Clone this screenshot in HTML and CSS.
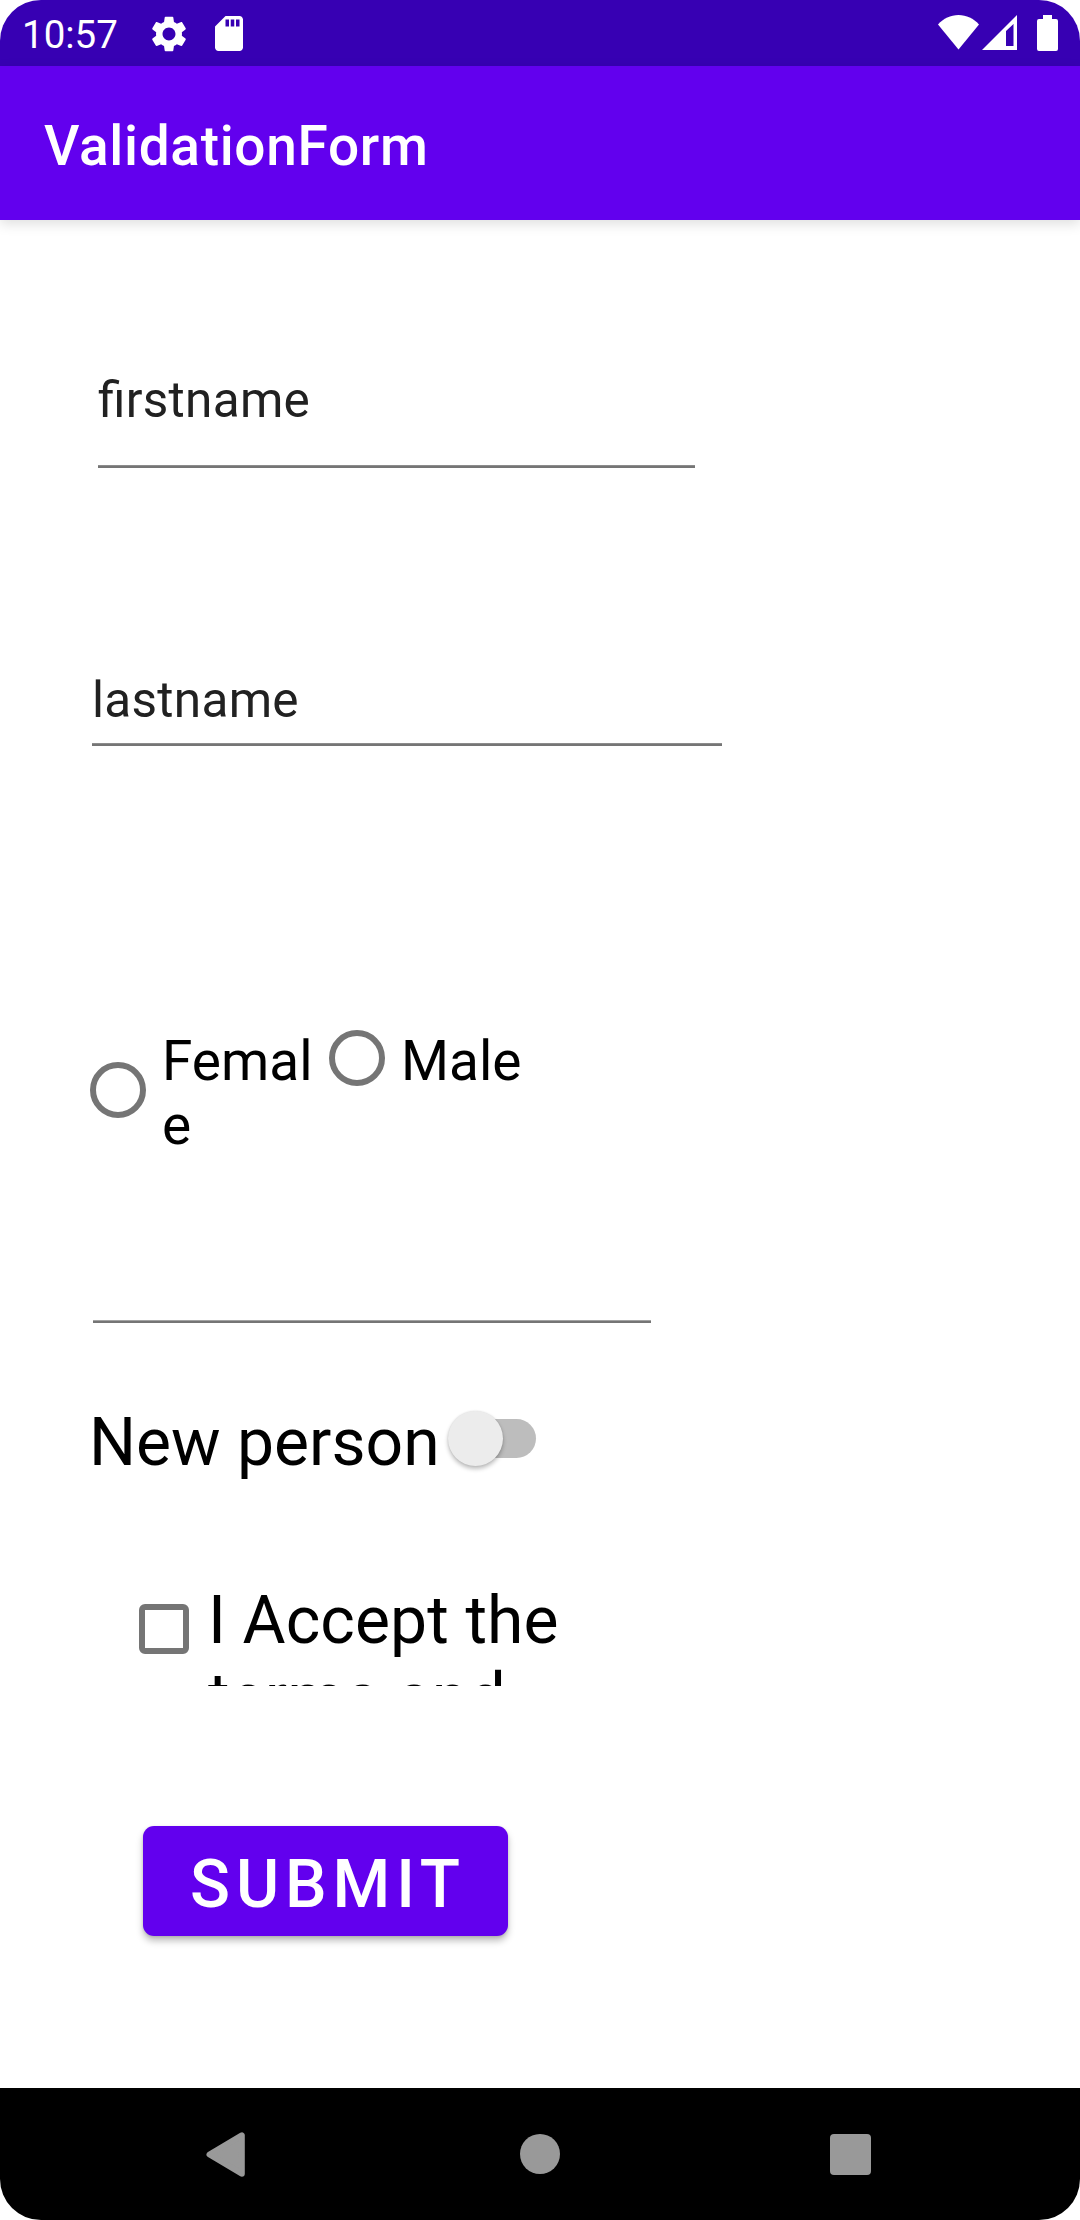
FILE: index.html
```html
<!DOCTYPE html>
<html lang="en">
<head>
<meta charset="utf-8">
<title>ValidationForm</title>
<link rel="stylesheet" href="styles.css">
</head>
<body>
<div class="screen">
  <header class="status-bar">
    <span class="clock">10:57</span>
    <svg class="gear" width="36" height="36" viewBox="2.2 2 19.6 20"><path fill="#fff" d="M19.14 12.94c.04-.3.06-.61.06-.94 0-.32-.02-.64-.07-.94l2.03-1.58c.18-.14.23-.41.12-.61l-1.92-3.32c-.12-.22-.37-.29-.59-.22l-2.39.96c-.5-.38-1.03-.7-1.62-.94l-.36-2.54c-.04-.24-.24-.41-.48-.41h-3.84c-.24 0-.43.17-.47.41l-.36 2.54c-.59.24-1.13.57-1.62.94l-2.39-.96c-.22-.08-.47 0-.59.22L2.74 8.87c-.12.21-.08.47.12.61l2.03 1.58c-.05.3-.09.63-.09.94s.02.64.07.94l-2.03 1.58c-.18.14-.23.41-.12.61l1.92 3.32c.12.22.37.29.59.22l2.39-.96c.5.38 1.03.7 1.62.94l.36 2.54c.05.24.24.41.48.41h3.84c.24 0 .44-.17.47-.41l.36-2.54c.59-.24 1.13-.56 1.62-.94l2.39.96c.22.08.47 0 .59-.22l1.92-3.32c.12-.22.07-.47-.12-.61l-2.01-1.58zM12 15.6c-1.98 0-3.6-1.62-3.6-3.6s1.62-3.6 3.6-3.6 3.6 1.62 3.6 3.6-1.62 3.6-3.6 3.6z"/></svg>
    <svg class="sd-card" width="28" height="35" viewBox="4 2 16 20" preserveAspectRatio="none"><path fill="#fff" fill-rule="evenodd" d="M18 2h-8L4.02 8 4 20c0 1.100.9 2 2 2h12c1.100 0 2-.9 2-2V4c0-1.100-.9-2-2-2zM10 4h2v4h-2zM13 4h2v4h-2zM16 4h2v4h-2z"/></svg>
    <span class="spacer"></span>
    <svg class="wifi" width="41" height="35" viewBox="0 0 41 35"><path fill="#fff" d="M0 9.500C5.500 3.500 12.500 0 20.500 0S35.500 3.500 41 9.500L20.500 34.500z"/></svg>
    <svg class="signal" width="35" height="35" viewBox="0 0 35 35"><path fill="#fff" fill-rule="evenodd" d="M35 0v35H0zM31.500 9L24 16v15h7.500z"/></svg>
    <svg class="battery" width="21" height="36" viewBox="0 0 21 36"><path fill="#fff" d="M6 0h9v4h4a2 2 0 0 1 2 2v28a2 2 0 0 1-2 2H2a2 2 0 0 1-2-2V6a2 2 0 0 1 2-2h4z"/></svg>
  </header>
  <div class="app-bar"><h1 class="title">ValidationForm</h1></div>
  <main class="form">
    <div class="field first-name">firstname</div>
    <div class="field last-name">lastname</div>
    <div class="gender">
      <div class="choice female"><span class="radio"></span><span class="choice-label">Female</span></div>
      <div class="choice male"><span class="radio"></span><span class="choice-label">Male</span></div>
    </div>
    <div class="field blank"></div>
    <div class="switch-row">
      <span class="switch-label">New person</span>
      <span class="track"><span class="thumb"></span></span>
    </div>
    <div class="terms">
      <span class="checkbox"></span>
      <span class="terms-label">I Accept the terms and</span>
    </div>
    <button class="submit" type="button">SUBMIT</button>
  </main>
  <nav class="nav-bar">
    <svg class="back" width="39" height="45" viewBox="0 0 39 45"><path fill="#999" stroke="#999" stroke-width="6" stroke-linejoin="round" d="M3.500 22.500L35.800 3.300v38.400z"/></svg>
    <span class="home"></span>
    <span class="recents"></span>
  </nav>
</div>
</body>
</html>
```

FILE: styles.css
```css
* { box-sizing: border-box; }

body {
  margin: 0;
  background: #fff;
  font-family: Roboto, sans-serif;
}

.screen {
  display: flex;
  flex-direction: column;
  width: 1080px;
  height: 2220px;
  border-radius: 41px;
  overflow: hidden;
  background: #fff;
}

.status-bar {
  display: flex;
  align-items: flex-start;
  height: 66px;
  flex: none;
  padding: 15px 22px 0;
  background: #3700b3;
}

.clock {
  width: 97px;
  font-size: 38.500px;
  line-height: 40px;
  color: #fff;
  white-space: nowrap;
}

.gear { margin: 1px 0 0 32px; }
.sd-card { margin: 1px 0 0 28px; }
.spacer { flex: 1; }
.signal { margin-left: 3px; }
.battery { margin-left: 20px; }

.app-bar {
  display: flex;
  align-items: center;
  height: 154px;
  flex: none;
  padding: 6px 44px 0;
  background: #6200ee;
  box-shadow: 0 4px 12px rgba(0, 0, 0, .13);
}

.title {
  margin: 0;
  font-size: 55px;
  font-weight: 500;
  line-height: 64px;
  letter-spacing: .680px;
  color: #fff;
}

.form {
  display: flex;
  flex-direction: column;
  align-items: flex-start;
  flex: 1;
}

.field {
  font-size: 49.500px;
  line-height: 60px;
  letter-spacing: .280px;
  font-feature-settings: "liga" 1;
  color: #212121;
  background: linear-gradient(#8c8c8c 0 1px, #757575 1px 3px) bottom / 100% 3px no-repeat;
}

.first-name {
  width: 597px;
  height: 98px;
  margin: 150px 0 0 98px;
}

.last-name {
  width: 630px;
  height: 76px;
  margin: 202px 0 0 92px;
}

.blank {
  width: 558px;
  height: 60px;
  margin: 106px 0 0 93px;
  background-image: linear-gradient(#a3a3a3 0 1px, #757575 1px 3px);
}

.gender {
  display: flex;
  align-items: flex-start;
  margin: 283px 0 0 90px;
  font-size: 55px;
  line-height: 64px;
  color: #000;
}

.choice {
  display: flex;
  align-items: center;
}

.female { width: 239px; }

.radio {
  width: 56px;
  height: 56px;
  margin-bottom: 7px;
  border: 6px solid #757575;
  border-radius: 50%;
}

.choice-label {
  margin-left: 16px;
  word-break: break-all;
}

.female .choice-label { width: 155px; }

.switch-row {
  display: flex;
  align-items: flex-start;
  height: 77px;
  margin: 81px 0 0 89px;
  font-size: 66px;
  line-height: 77px;
  color: #000;
}

.switch-label { width: 365px; }

.track {
  width: 82px;
  height: 39px;
  margin-top: 15px;
  border-radius: 20px;
  background: #bdbdbd;
}

.thumb {
  display: block;
  width: 55px;
  height: 55px;
  margin: -8px 0 0 -6px;
  border-radius: 50%;
  background: #ececec;
  box-shadow: 0 3px 4px rgba(0, 0, 0, .25), 0 0 2px rgba(0, 0, 0, .12);
}

.terms {
  display: flex;
  align-items: flex-start;
  width: 440px;
  height: 104px;
  margin: 101px 0 0 139px;
  overflow: hidden;
  font-size: 66px;
  line-height: 77px;
  color: #000;
}

.checkbox {
  flex: none;
  width: 50px;
  height: 50px;
  margin-top: 22px;
  border: 6px solid #757575;
  border-radius: 6px;
}

.terms-label {
  flex: 1;
  margin-left: 19px;
  letter-spacing: .1px;
}

.submit {
  width: 365px;
  height: 110px;
  margin: 140px 0 0 143px;
  padding: 6px 0 0 5px;
  border: 0;
  border-radius: 11px;
  background: #6200ee;
  box-shadow: 0 5px 7px rgba(0, 0, 0, .25), 0 1px 3px rgba(0, 0, 0, .12);
  font: 500 66px/77px Roboto, sans-serif;
  letter-spacing: 5.900px;
  color: #fff;
}

.nav-bar {
  display: flex;
  align-items: flex-start;
  height: 132px;
  flex: none;
  padding: 44px 0 0 206px;
  background: #000;
}

.home {
  width: 40px;
  height: 40px;
  margin: 2px 0 0 275px;
  border-radius: 50%;
  background: #999;
}

.recents {
  width: 41px;
  height: 41px;
  margin: 2px 0 0 270px;
  border-radius: 4px;
  background: #999;
}
```
